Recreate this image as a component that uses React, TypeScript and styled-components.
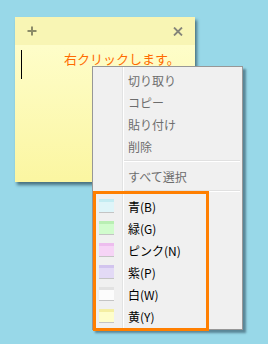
import styled, { createGlobalStyle } from "styled-components";

const GlobalStyle = createGlobalStyle`
  html, body {
    margin: 0;
    padding: 0;
    background: #98d8e8;
  }
  body {
    font-family: "Noto Sans CJK JP", "Liberation Sans", sans-serif;
  }
`;

const editItems = ["切り取り", "コピー", "貼り付け", "削除"];

const colorItems = [
  { label: "青(B)", body: "#dff5f9", top: "#c4ecf2" },
  { label: "緑(G)", body: "#d1fccd", top: "#b9efb3" },
  { label: "ピンク(N)", body: "#f6d4f6", top: "#edbdee" },
  { label: "紫(P)", body: "#e3daf6", top: "#d2c4ee" },
  { label: "白(W)", body: "#fcfcfc", top: "#e2e2e2" },
  { label: "黄(Y)", body: "#fefdca", top: "#f4eea2" },
];

const Desktop = styled.div`
  position: relative;
  width: 268px;
  height: 344px;
  overflow: hidden;
  background: #98d8e8;
`;

const Note = styled.div`
  position: absolute;
  left: 15px;
  top: 17px;
  width: 180px;
  height: 165px;
  display: flex;
  flex-direction: column;
  box-shadow: 2px 3px 3px rgba(30, 60, 75, 0.65);
`;

const NoteTitle = styled.div`
  height: 28px;
  display: flex;
  align-items: center;
  justify-content: space-between;
  padding: 0 12px 0 12px;
  background: #f8f5b4;
`;

const NoteBody = styled.div`
  flex: 1;
  display: flex;
  align-items: flex-start;
  padding: 5px 6px;
  background: linear-gradient(#fefdc9, #fbf6a1);
`;

const Caret = styled.div`
  width: 1px;
  height: 29px;
  background: #000;
`;

const Hint = styled.span`
  margin-left: 42px;
  font-size: 13px;
  line-height: 17px;
  color: #ff6a00;
  white-space: nowrap;
`;

const Menu = styled.div`
  position: absolute;
  left: 92px;
  top: 66px;
  width: 149px;
  padding: 2px 0;
  border: 1px solid #979797;
  background: linear-gradient(
    to right,
    #f0f0f0 0,
    #f0f0f0 29px,
    #e2e3e3 29px,
    #e2e3e3 30px,
    #ffffff 30px,
    #ffffff 31px,
    #f0f0f0 31px
  );
  box-shadow: 3px 3px 2px rgba(40, 70, 85, 0.55);
`;

const Item = styled.div<{ $disabled?: boolean }>`
  height: 22px;
  display: flex;
  align-items: center;
  font-size: 12px;
  color: ${(p) => (p.$disabled ? "#6d6d6d" : "#000")};
  white-space: nowrap;
`;

const Gutter = styled.div`
  width: 35px;
  flex: none;
  display: flex;
  align-items: center;
  padding-left: 6px;
  box-sizing: border-box;
`;

const Separator = styled.div`
  height: 8px;
  display: flex;
  align-items: center;
  padding: 0 2px 0 31px;
  &::after {
    content: "";
    flex: 1;
    height: 1px;
    border-top: 1px solid #e0e0e0;
    border-bottom: 1px solid #ffffff;
    box-sizing: border-box;
    height: 2px;
  }
`;

const ColorGroup = styled.div`
  position: relative;
  &::after {
    content: "";
    position: absolute;
    left: 0;
    top: -4px;
    bottom: -4px;
    width: 116px;
    border: 3px solid #ff7f00;
    box-sizing: border-box;
    pointer-events: none;
  }
`;

const Swatch = styled.div<{ $body: string; $top: string }>`
  width: 15px;
  height: 14px;
  box-sizing: border-box;
  background: linear-gradient(
    ${(p) => p.$top} 0,
    ${(p) => p.$top} 3px,
    ${(p) => p.$body} 3px
  );
  border-bottom: 1px solid #c4c4c4;
`;

const PlusIcon = () => (
  <svg width="10" height="10" viewBox="0 0 10 10">
    <path d="M5 0.5v9M0.5 5h9" stroke="#8b8b68" strokeWidth="2" />
  </svg>
);

const CloseIcon = () => (
  <svg width="10" height="9" viewBox="0 0 10 9">
    <path d="M1 0.5l8 8M9 0.5l-8 8" stroke="#85857a" strokeWidth="1.8" />
  </svg>
);

export default function App() {
  return (
    <>
      <GlobalStyle />
      <Desktop>
        <Note>
          <NoteTitle>
            <PlusIcon />
            <CloseIcon />
          </NoteTitle>
          <NoteBody>
            <Caret />
            <Hint>右クリックします。</Hint>
          </NoteBody>
        </Note>
        <Menu>
          {editItems.map((label) => (
            <Item key={label} $disabled>
              <Gutter />
              {label}
            </Item>
          ))}
          <Separator />
          <Item $disabled>
            <Gutter />
            すべて選択
          </Item>
          <Separator />
          <ColorGroup>
            {colorItems.map((c) => (
              <Item key={c.label}>
                <Gutter>
                  <Swatch $body={c.body} $top={c.top} />
                </Gutter>
                {c.label}
              </Item>
            ))}
          </ColorGroup>
        </Menu>
      </Desktop>
    </>
  );
}
